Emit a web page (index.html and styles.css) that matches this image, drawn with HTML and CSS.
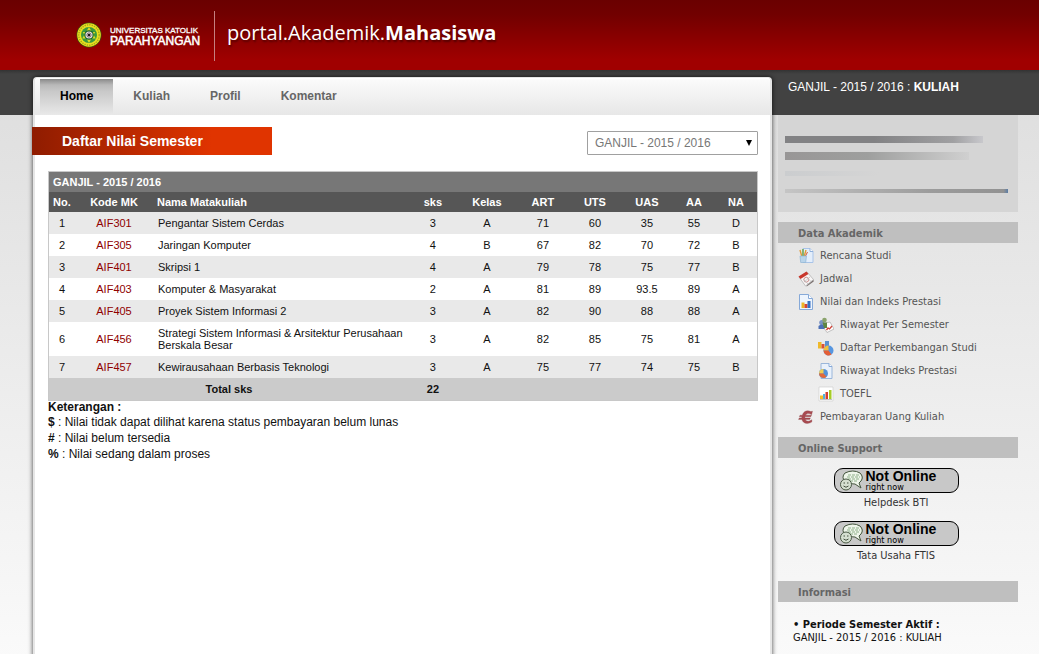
FILE: index.html
```html
<!DOCTYPE html>
<html lang="id">
<head>
<meta charset="utf-8">
<title>Portal Akademik Mahasiswa</title>
<link rel="stylesheet" href="styles.css">
</head>
<body>
<header class="header">
  <svg class="seal" viewBox="0 0 26 26" aria-hidden="true">
    <circle cx="13" cy="13" r="12.5" fill="#3d5210"/>
    <circle cx="13" cy="13" r="11.8" fill="#e9e21e"/>
    <circle cx="13" cy="13" r="10.2" fill="none" stroke="#a9a41c" stroke-width="1.4" stroke-dasharray="1.4 1"/>
    <circle cx="13" cy="13" r="8" fill="#3a9a3c"/>
    <path d="M13 5l6.8 11.6H6.2zM13 21L6.8 10h12.4z" fill="#d9dc26"/>
    <circle cx="13" cy="13" r="4.8" fill="#17642e"/>
    <circle cx="13" cy="13" r="3.6" fill="#e5dede"/>
    <path d="M13 9.8v6.4M9.8 13h6.4M10.8 10.8l4.4 4.4M15.2 10.8l-4.4 4.4" stroke="#4b3540" stroke-width=".6"/>
    <circle cx="13" cy="13" r="1.3" fill="#241c22"/>
  </svg>
  <div class="univ"><span class="univ-top">UNIVERSITAS KATOLIK</span><span class="univ-name">PARAHYANGAN</span></div>
  <div class="portal">portal.Akademik.<b>Mahasiswa</b></div>
</header>

<div class="layout">
  <main class="panel">
    <nav class="tabs">
      <a class="tab tab-active" href="#">Home</a>
      <a class="tab" href="#">Kuliah</a>
      <a class="tab" href="#">Profil</a>
      <a class="tab" href="#">Komentar</a>
    </nav>
    <div class="titlebar">
      <h1 class="title">Daftar Nilai Semester</h1>
      <div class="picker">
        <select class="semester" aria-label="Semester"><option>GANJIL - 2015 / 2016</option></select>
      </div>
    </div>
    <div class="content">
      <table class="grades">
        <colgroup>
          <col class="c-no"><col class="c-code"><col><col class="c-sks"><col class="c-class"><col class="c-score"><col class="c-score"><col class="c-score"><col class="c-final"><col class="c-final">
        </colgroup>
        <thead>
          <tr class="group"><th colspan="10">GANJIL - 2015 / 2016</th></tr>
          <tr class="heads"><th>No.</th><th class="mid">Kode MK</th><th>Nama Matakuliah</th><th class="mid">sks</th><th class="mid">Kelas</th><th class="mid">ART</th><th class="mid">UTS</th><th class="mid">UAS</th><th class="mid">AA</th><th class="mid">NA</th></tr>
        </thead>
        <tbody>
          <tr><td>1</td><td class="code">AIF301</td><td class="name">Pengantar Sistem Cerdas</td><td>3</td><td>A</td><td>71</td><td>60</td><td>35</td><td>55</td><td>D</td></tr>
          <tr><td>2</td><td class="code">AIF305</td><td class="name">Jaringan Komputer</td><td>4</td><td>B</td><td>67</td><td>82</td><td>70</td><td>72</td><td>B</td></tr>
          <tr><td>3</td><td class="code">AIF401</td><td class="name">Skripsi 1</td><td>4</td><td>A</td><td>79</td><td>78</td><td>75</td><td>77</td><td>B</td></tr>
          <tr><td>4</td><td class="code">AIF403</td><td class="name">Komputer &amp; Masyarakat</td><td>2</td><td>A</td><td>81</td><td>89</td><td>93.5</td><td>89</td><td>A</td></tr>
          <tr><td>5</td><td class="code">AIF405</td><td class="name">Proyek Sistem Informasi 2</td><td>3</td><td>A</td><td>82</td><td>90</td><td>88</td><td>88</td><td>A</td></tr>
          <tr><td>6</td><td class="code">AIF456</td><td class="name">Strategi Sistem Informasi &amp; Arsitektur Perusahaan Berskala Besar</td><td>3</td><td>A</td><td>82</td><td>85</td><td>75</td><td>81</td><td>A</td></tr>
          <tr><td>7</td><td class="code">AIF457</td><td class="name">Kewirausahaan Berbasis Teknologi</td><td>3</td><td>A</td><td>75</td><td>77</td><td>74</td><td>75</td><td>B</td></tr>
        </tbody>
        <tfoot>
          <tr><td colspan="3">Total sks</td><td>22</td><td colspan="6"></td></tr>
        </tfoot>
      </table>
      <div class="legend">
        <div class="legend-title">Keterangan :</div>
        <div><b>$</b> : Nilai tidak dapat dilihat karena status pembayaran belum lunas</div>
        <div><b>#</b> : Nilai belum tersedia</div>
        <div><b>%</b> : Nilai sedang dalam proses</div>
      </div>
    </div>
  </main>

  <aside class="side">
    <div class="period">GANJIL - 2015 / 2016 : <b>KULIAH</b></div>
    <div class="profile">
      <span class="smear smear-name"></span>
      <span class="smear smear-id"></span>
      <span class="smear smear-faint"></span>
      <span class="smear smear-line"></span>
    </div>
    <h2 class="side-title">Data Akademik</h2>
    <ul class="menu">
      <li><a href="#"><svg viewBox="0 0 16 16"><path d="M5 .5h7l3 3v11H5z" fill="#e4eefb" stroke="#a9c4e8"/><path d="M12 .5v3h3" fill="#fff" stroke="#8fb0dc"/><path d="M2 2l2 7M8 2L6 9" stroke="#e09a36" stroke-width="1.4"/><path d="M5 1v8" stroke="#5da03a" stroke-width="1.3"/><path d="M9.5 4L7 9" stroke="#d65a3a"/><path d="M2 8h6.5l-.8 6.5h-5z" fill="#b9d4ea" stroke="#8fb4d4" stroke-width=".7"/></svg>Rencana Studi</a></li>
      <li><a href="#"><svg viewBox="0 0 16 16"><path d="M1 6l8-5 6.5 7.5-8 6.500z" fill="#f8f6f6" stroke="#aaa" stroke-width=".7"/><path d="M.5 5.500L8.500.5l2 2.500L2.500 8z" fill="#c9362c"/><path d="M8.500 14.800l7-6 .2 1.600-7 5.200z" fill="#79706f"/><circle cx="8.300" cy="8.700" r="2.400" fill="none" stroke="#c97975" stroke-width=".8"/><path d="M5 8l5 5M8 5.500l5 5M6 11l6-5" stroke="#bbb" stroke-width=".7"/></svg>Jadwal</a></li>
      <li><a href="#"><svg viewBox="0 0 16 16"><path d="M1.500.5h9l4 4v11h-13z" fill="#edf4fd" stroke="#86a9d8"/><path d="M10.500.5v4h4" fill="#fff" stroke="#86a9d8"/><path d="M3.500 8.500h3V14h-3z" fill="#edb526"/><path d="M6.500 10h3v4h-3z" fill="#d84430"/><path d="M9.500 7h3v7h-3z" fill="#356fc1"/></svg>Nilai dan Indeks Prestasi</a></li>
      <li class="sub"><a href="#"><svg viewBox="0 0 16 16"><path d="M7 6l5-1 4 7-7 3.500-4-6z" fill="#fff" stroke="#aaa" stroke-width=".7"/><circle cx="3.800" cy="5.500" r="2.600" fill="#7c93c4"/><path d="M.5 9q3-3 6 0v3h-6z" fill="#4c70b6"/><circle cx="6.500" cy="3" r="2.300" fill="#8aa36c"/><path d="M4.500 5.500h4.500V11H6z" fill="#5f8542"/><path d="M8.500 13l1.500-2 1.500 1L14 9" fill="none" stroke="#d04338" stroke-width="1.300"/></svg>Riwayat Per Semester</a></li>
      <li class="sub"><a href="#"><svg viewBox="0 0 16 16"><path d="M0 2h3.500v6.500H0z" fill="#efb92b"/><path d="M3.500 4h3v4.500h-3z" fill="#d95234"/><path d="M7 1h4v6H7z" fill="#5b92d1"/><circle cx="10.500" cy="10.500" r="5" fill="#5796e0"/><path d="M10.500 10.500V5.500a5 5 0 0 0-5 5z" fill="#f1c23d"/><path d="M10.500 10.500h-5a5 5 0 0 0 8 4z" fill="#e35e36"/></svg>Daftar Perkembangan Studi</a></li>
      <li class="sub"><a href="#"><svg viewBox="0 0 16 16"><path d="M3 .5h8l3 3v12H3z" fill="#e9f1fb" stroke="#9ab6da"/><path d="M11 .5v3h3" fill="#fff" stroke="#86a9d8"/><circle cx="5.500" cy="10.500" r="4.500" fill="#5391d8"/><path d="M5.500 10.500V6a4.500 4.500 0 0 0-4.500 4.500z" fill="#f0cf55"/><path d="M5.500 10.500H1a4.500 4.500 0 0 0 7.500 3.300z" fill="#e26838"/></svg>Riwayat Indeks Prestasi</a></li>
      <li class="sub"><a href="#"><svg viewBox="0 0 16 16"><path d="M1 1h14v14H1z" fill="#fff" stroke="#d0d0d0" stroke-width=".7"/><path d="M2 9.500h3V13H2z" fill="#f2bd28"/><path d="M5 8h2v5H5z" fill="#4eb1db"/><path d="M7.500 6H10v7H7.500z" fill="#d33d2e"/><path d="M11 4h2.500v9H11z" fill="#a6cd27"/><path d="M2 13.500h12" stroke="#999" stroke-width=".6"/></svg>TOEFL</a></li>
      <li><a href="#"><svg viewBox="0 0 16 16"><path d="M14.500 2.200l-.9 3.600C11.500 4 8.500 4.300 7.500 6.200h6l-.7 1.500H7l-.1 1.200h5.500l-.7 1.500H7.300c1 2.200 4 2.300 6.500.3v2.300c-4 2.500-8.800 1.700-9.900-2.600H.5l.8-1.500h2.400l.1-1.200H1.300L2 6.200h2.300C5.500 2 9.500.8 12.800 2.600z" fill="#a84a50" stroke="#873f45" stroke-width=".3"/></svg>Pembayaran Uang Kuliah</a></li>
    </ul>
    <h2 class="side-title">Online Support</h2>
    <div class="support">
      <a class="contact" href="#">
        <span class="badge"><svg viewBox="0 0 26 22"><path d="M7 3Q15-1 22 3q4 4 1 8l-2 2 2 5-6-4Q9 14 7 12q-4-5 0-9z" fill="#eef5ea" stroke="#44553d"/><path d="M10 5h11M9 7h13M10 9h11M12 11h7" stroke="#8fb08a" stroke-width="1" stroke-dasharray="3 1"/><circle cx="8" cy="14.500" r="5.500" fill="#d5dfd0" stroke="#4a5945"/><path d="M5.500 13h1.500M9 13h1.500M5.500 16q2.500 2.500 5 0" fill="none" stroke="#465341"/></svg><span class="badge-text"><b>Not Online</b><span>right now</span></span></span>
        <span>Helpdesk BTI</span>
      </a>
      <a class="contact" href="#">
        <span class="badge"><svg viewBox="0 0 26 22"><path d="M7 3Q15-1 22 3q4 4 1 8l-2 2 2 5-6-4Q9 14 7 12q-4-5 0-9z" fill="#eef5ea" stroke="#44553d"/><path d="M10 5h11M9 7h13M10 9h11M12 11h7" stroke="#8fb08a" stroke-width="1" stroke-dasharray="3 1"/><circle cx="8" cy="14.500" r="5.500" fill="#d5dfd0" stroke="#4a5945"/><path d="M5.500 13h1.500M9 13h1.500M5.500 16q2.500 2.500 5 0" fill="none" stroke="#465341"/></svg><span class="badge-text"><b>Not Online</b><span>right now</span></span></span>
        <span>Tata Usaha FTIS</span>
      </a>
    </div>
    <h2 class="side-title">Informasi</h2>
    <div class="info"><b>• Periode Semester Aktif :</b><span>GANJIL - 2015 / 2016 : KULIAH</span></div>
  </aside>
</div>
</body>
</html>
```

FILE: styles.css
```css
* { box-sizing: border-box; }

body {
  margin: 0;
  min-height: 100vh;
  display: flex;
  flex-direction: column;
  background: linear-gradient(#dadada, #fafafa);
  font: 12px/16px "Liberation Sans", Arial, sans-serif;
  color: #111;
}

a { color: inherit; text-decoration: none; }

/* Header */
.header {
  display: flex;
  align-items: center;
  height: 70px;
  padding-left: 76px;
  background: linear-gradient(#6a0000 0, #720000 15px, #a00000 60px, #a00000);
  color: #fff;
}
.seal { width: 26px; height: 26px; }
.univ {
  display: flex;
  flex-direction: column;
  justify-content: center;
  width: 105px;
  height: 50px;
  margin: 2px 12px 0 8px;
  border-right: 1px solid #c58080;
}
.univ-top { font-size: 8px; line-height: 10px; white-space: nowrap; -webkit-text-stroke: 0.3px #fff; }
.univ-name { font-size: 12px; line-height: 11px; -webkit-text-stroke: 0.5px #fff; }
.portal {
  padding-bottom: 4px;
  font: 20px/28px "Open Sans", "Noto Sans", sans-serif;
  text-shadow: 1px 2px 2px rgba(0, 0, 0, .4);
}
.portal b { font-weight: 700; }

/* Page columns */
.layout {
  flex: 1;
  display: flex;
  gap: 6px;
  padding: 0 21px 0 33px;
  background: linear-gradient(#333 0, #424242 4px, #424242 45px, transparent 45px);
}
.panel {
  flex: 1;
  min-width: 0;
  margin-top: 7px;
  background: #fff;
  border: solid #e6e6e6;
  border-width: 1px 2px 0;
  border-radius: 4px 4px 0 0;
  box-shadow: 0 0 5px rgba(0, 0, 0, .75);
}

/* Tabs */
.tabs {
  display: flex;
  height: 37px;
  padding-left: 5px;
  border-top: 1px solid #fff;
  border-radius: 3px 3px 0 0;
  background: linear-gradient(#fbfbfb, #e7e7e7);
}
.tab { padding: 9px 20px; font-weight: bold; color: #666; }
.tab-active { color: #000; background: linear-gradient(#8a8a8a 0, #b9b9b9 6px, #c8c8c8 12px, #e9e9e9); }

/* Page title and semester picker */
.titlebar { display: flex; justify-content: space-between; margin-top: 12px; padding-right: 12px; }
.title {
  width: 240px;
  margin: 0 0 0 -3px;
  padding: 6px 30px;
  font-size: 14px;
  line-height: 16px;
  color: #fff;
  background: linear-gradient(90deg, #8f1c00, #e03400 75%);
}
.picker { position: relative; margin-top: 4px; }
.picker::after {
  content: "";
  position: absolute;
  top: 9px;
  right: 6px;
  border: solid transparent;
  border-width: 6px 3px 0;
  border-top-color: #000;
  pointer-events: none;
}
.semester {
  appearance: none;
  width: 171px;
  height: 24px;
  padding: 0 7px;
  border: 1px solid #a0a0a0;
  border-radius: 1px;
  background: #fff;
  font: 12px "Liberation Sans", Arial, sans-serif;
  color: #777;
}

/* Grades */
.content { padding: 16px 12px 16px 13px; }
.grades {
  width: 100%;
  table-layout: fixed;
  border-collapse: separate;
  border-spacing: 0;
  border: 1px solid #c8c8c8;
  font-size: 11px;
  line-height: 12px;
}
.c-no { width: 26px; }
.c-code { width: 78px; }
.c-sks { width: 48px; }
.c-class { width: 60px; }
.c-score { width: 52px; }
.c-final { width: 42px; }
.grades th { padding: 4px; text-align: left; color: #fff; white-space: nowrap; }
.grades .mid { text-align: center; }
.grades td { padding: 5px; text-align: center; }
.grades .name { text-align: left; }
.grades .code { color: #900000; }
.group { background: #777; }
.heads { background: #565656; }
.grades tbody tr:nth-child(odd) { background: #e9e9e9; }
.grades tfoot { background: #cbcbcb; font-weight: bold; }
.legend-title { font-weight: bold; line-height: 13px; }

/* Sidebar */
.side {
  width: 240px;
  font: 11px/13px "DejaVu Sans Condensed", Tahoma, sans-serif;
}
.period {
  height: 45px;
  padding: 9px 10px;
  font: 12px/16px "Liberation Sans", Arial, sans-serif;
  color: #fff;
}
.profile {
  display: flex;
  flex-direction: column;
  height: 97px;
  padding: 21px 10px 0 7px;
  background: #d5d5d5;
}
.smear { display: block; }
.smear-name { width: 198px; height: 7px; background: linear-gradient(90deg, #828284 45%, #a0a0a2 85%, #c8c8cc); }
.smear-id { width: 184px; height: 8px; margin-top: 9px; background: linear-gradient(90deg, #989696, #9e9f9e 45%, #d0d0d0); }
.smear-faint { width: 94px; height: 5px; margin-top: 11px; background: linear-gradient(90deg, #cbcdcf, #d5d5d5); }
.smear-line { height: 4px; margin-top: 13px; background: linear-gradient(90deg, #c5c5c5, #9c9c9c 65%, #929292 98%, #5c7da5); }
.side-title {
  margin: 10px 0 0;
  padding: 5px 20px 3px;
  font-size: 11px;
  line-height: 13px;
  color: #666;
  background: #bfbfbf;
}
.menu { margin: 0; padding: 0 0 0 20px; list-style: none; color: #555; }
.menu a { display: flex; align-items: center; gap: 6px; height: 23px; padding-top: 2px; white-space: nowrap; }
.menu svg { width: 16px; height: 16px; }
.menu .sub { padding-left: 20px; }
.support { display: flex; flex-direction: column; align-items: center; gap: 12px; padding: 10px 4px 9px 0; }
.contact { display: flex; flex-direction: column; align-items: center; gap: 3px; color: #333; }
.badge {
  display: flex;
  align-items: center;
  gap: 2px;
  width: 125px;
  height: 25px;
  padding-left: 3px;
  border: 1px solid #000;
  border-radius: 9px;
  background: #c8c8c8;
  color: #000;
}
.badge svg { width: 26px; height: 22px; }
.badge-text { display: flex; flex-direction: column; font-size: 9px; line-height: 9px; }
.badge-text b { font: bold 14px/14px "Liberation Sans", Arial, sans-serif; }
.info { display: flex; flex-direction: column; padding: 16px 15px; color: #111; }
```
